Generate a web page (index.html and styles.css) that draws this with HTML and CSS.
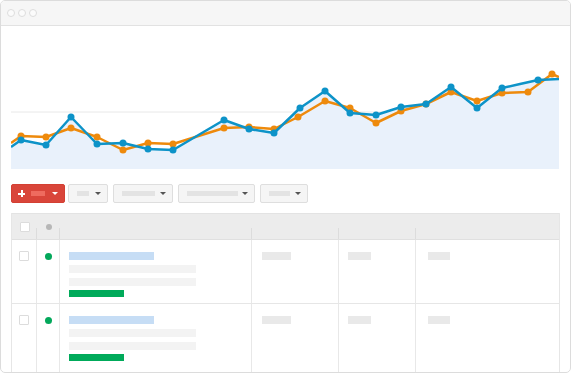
FILE: index.html
```html
<!DOCTYPE html>
<html lang="en">
<head>
    <meta charset="UTF-8">
    <meta name="viewport" content="width=device-width, initial-scale=1.0">
    <title>Campaign Dashboard</title>
    <link rel="stylesheet" href="styles.css">
</head>
<body>
    <div class="window">
        <div class="titlebar">
            <span class="light"></span>
            <span class="light"></span>
            <span class="light"></span>
        </div>
        <div class="content">
            <svg class="chart" viewBox="11 26 548 143" width="548" height="143">
                <line x1="11" y1="112" x2="559" y2="112" stroke="#e8e8e8" stroke-width="1"/>
                <polygon fill="#e9f1fb" points="11,147 21,140 46,145 71,117 97,144 123,143 148,149 173,150 224,120 249,129 274,133 300,108 325,91 350,113 376,115 401,107 426,104 451,87 477,108 502,88 520,84 538,80 559,79 559,169 11,169"/>
                <g id="orange" fill="#ee8a0c" stroke="#ee8a0c"></g>
                <g id="blue" fill="#0d93c8" stroke="#0d93c8"></g>
            </svg>

            <div class="toolbar">
                <div class="btn btn-red">
                    <span class="plus"></span>
                    <span class="bar"></span>
                    <span class="caret"></span>
                </div>
                <div class="btn w40"><span class="bar" style="width:12px"></span><span class="caret"></span></div>
                <div class="btn w60"><span class="bar" style="width:33px"></span><span class="caret"></span></div>
                <div class="btn w77"><span class="bar" style="width:51px"></span><span class="caret"></span></div>
                <div class="btn w48"><span class="bar" style="width:21px"></span><span class="caret"></span></div>
            </div>

            <div class="table" id="table">
                <div class="row head">
                    <div class="cell center"><span class="check"></span></div>
                    <div class="cell center"><span class="status grey"></span></div>
                    <div class="cell"></div>
                    <div class="cell"></div>
                    <div class="cell"></div>
                    <div class="cell"></div>
                </div>
            </div>
        </div>
    </div>

    <script>
    const orange = [[11,143],[21,136],[46,137],[71,128],[97,137],[123,150],[148,143],[173,144],[224,128],[249,127],[274,129],[298,117],[325,101],[350,108],[376,123],[401,111],[426,104],[451,92],[477,101],[502,93],[528,92],[552,74],[559,77]];
    const blue = [[11,147],[21,140],[46,145],[71,117],[97,144],[123,143],[148,149],[173,150],[224,120],[249,129],[274,133],[300,108],[325,91],[350,113],[376,115],[401,107],[426,104],[451,87],[477,108],[502,88],[520,84],[538,80],[559,79]];
    const noDot = [11, 520, 559];
    const ns = 'http://www.w3.org/2000/svg';

    function drawSeries(id, points) {
        const g = document.getElementById(id);
        const line = document.createElementNS(ns, 'polyline');
        line.setAttribute('points', points.map(p => p.join(',')).join(' '));
        line.setAttribute('fill', 'none');
        line.setAttribute('stroke-width', '2.5');
        line.setAttribute('stroke-linejoin', 'round');
        g.appendChild(line);
        points.forEach(([x, y]) => {
            if (noDot.includes(x)) return;
            const dot = document.createElementNS(ns, 'circle');
            dot.setAttribute('cx', x);
            dot.setAttribute('cy', y);
            dot.setAttribute('r', '3.5');
            dot.setAttribute('stroke', 'none');
            g.appendChild(dot);
        });
    }

    function addRow(last) {
        const row = document.createElement('div');
        row.className = last ? 'row body last' : 'row body';
        row.innerHTML =
            '<div class="cell center"><span class="check"></span></div>' +
            '<div class="cell center"><span class="status"></span></div>' +
            '<div class="cell lines">' +
                '<span class="line title"></span>' +
                '<span class="line text"></span>' +
                '<span class="line text"></span>' +
                '<span class="line tag"></span>' +
            '</div>' +
            '<div class="cell pad10"><span class="line stat" style="width:29px"></span></div>' +
            '<div class="cell pad9"><span class="line stat" style="width:23px"></span></div>' +
            '<div class="cell pad12"><span class="line stat" style="width:22px"></span></div>';
        document.getElementById('table').appendChild(row);
    }

    drawSeries('orange', orange);
    drawSeries('blue', blue);
    addRow(false);
    addRow(true);
    </script>
</body>
</html>
```

FILE: styles.css
```css
body { margin: 0; font-family: "Liberation Sans", Arial, sans-serif; background: #fff; }
.window { width: 571px; height: 373px; box-sizing: border-box; border: 1px solid #dcdcdc; border-radius: 5px; overflow: hidden; display: flex; flex-direction: column; background: #fff; }
.titlebar { height: 24px; flex: none; background: #f6f6f6; border-bottom: 1px solid #e2e2e2; display: flex; align-items: center; gap: 3px; padding-left: 6px; }
.light { width: 6px; height: 6px; border: 1px solid #dddddd; border-radius: 50%; background: #fbfbfb; }
.content { flex: 1; padding: 0 10px; overflow: hidden; }
.chart { display: block; }

.toolbar { display: flex; margin-top: 15px; height: 19px; }
.btn { box-sizing: border-box; height: 19px; border: 1px solid #dedede; border-radius: 2px; background: #f5f5f5; display: flex; align-items: center; justify-content: space-between; padding: 0 6px 0 8px; margin-left: 5px; }
.btn .bar { height: 5px; background: #e3e3e3; }
.btn .caret { width: 0; height: 0; border-left: 3px solid transparent; border-right: 3px solid transparent; border-top: 3px solid #555; }
.w40 { width: 40px; margin-left: 3px; }
.w60 { width: 60px; }
.w77 { width: 77px; }
.w48 { width: 48px; }
.btn-red { width: 54px; margin-left: 0; background: #d9453a; border-color: #d34033; justify-content: flex-start; gap: 6px; padding-left: 6px; }
.btn-red .bar { width: 14px; background: #ee6b5f; }
.btn-red .caret { border-top-color: #fff; margin-left: 1px; }
.plus { width: 7px; height: 7px; background: linear-gradient(#fff, #fff) center / 7px 2px no-repeat, linear-gradient(#fff, #fff) center / 2px 7px no-repeat; }

.table { margin-top: 10px; border-left: 1px solid #e6e6e6; border-right: 1px solid #e6e6e6; }
.row { display: grid; grid-template-columns: 25px 23px 192px 87px 77px 1fr; }
.head { height: 25px; background: #ececec; border-top: 1px solid #e3e3e3; border-bottom: 1px solid #e0e0e0; }
.head .cell { background: linear-gradient(#dcdcdc, #dcdcdc) right bottom / 1px 11px no-repeat; }
.head .cell:last-child { background: none; }
.head .center { align-items: center; }
.body { height: 63px; border-bottom: 1px solid #e6e6e6; }
.body.last { height: 80px; border-bottom: none; }
.body .cell { border-right: 1px solid #e8e8e8; padding-top: 12px; }
.body .cell:last-child { border-right: none; }
.cell { box-sizing: border-box; display: flex; }
.center { justify-content: center; align-items: flex-start; }
.check { width: 8px; height: 8px; background: #fff; border: 1px solid #dcdcdc; border-radius: 1px; }
.body .check { margin-top: -1px; }
.status { width: 7px; height: 7px; border-radius: 50%; background: #03a85b; margin-top: 1px; }
.status.grey { width: 6px; height: 6px; background: #b7b7b7; margin-top: 0; }

.lines { flex-direction: column; padding-left: 9px; }
.line { display: block; height: 8px; }
.title { width: 85px; background: #c6ddf5; }
.text { width: 127px; background: #f3f3f3; margin-top: 5px; }
.tag { width: 55px; height: 7px; background: #00aa5a; margin-top: 4px; }
.stat { background: #e9e9e9; }
.pad10 { padding-left: 10px; }
.pad9 { padding-left: 9px; }
.pad12 { padding-left: 12px; }
```
